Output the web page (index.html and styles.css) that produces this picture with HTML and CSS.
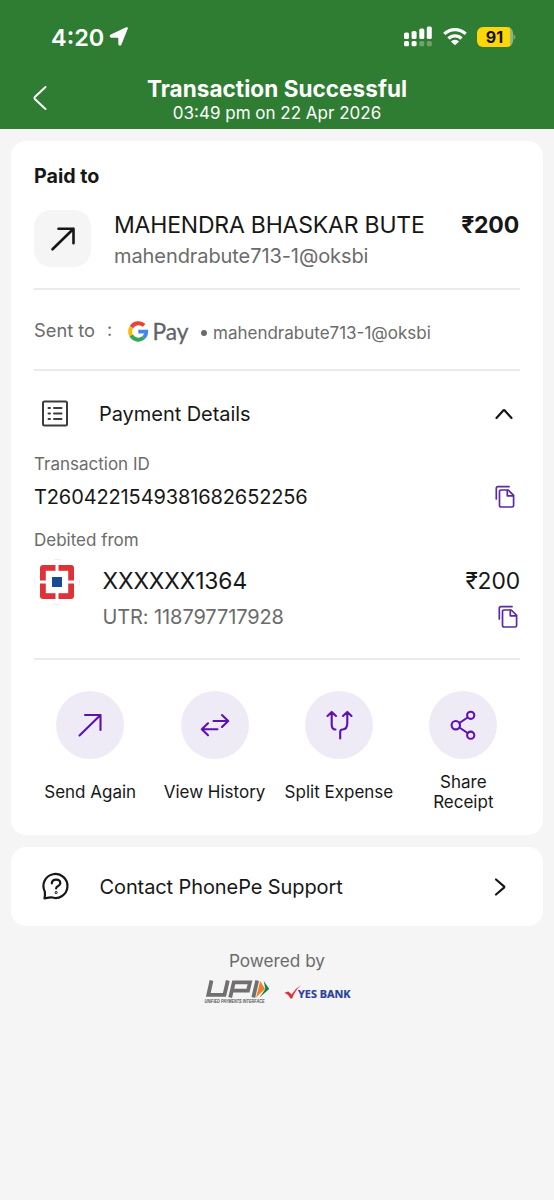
FILE: index.html
```html
<!DOCTYPE html>
<html lang="en">
<head>
<meta charset="utf-8">
<title>Transaction Successful</title>
<link rel="stylesheet" href="styles.css">
</head>
<body>
<header class="header">
  <div class="status">
    <div class="status-left">
      <span class="clock">4:20</span>
      <svg width="20" height="20" viewBox="0 0 20 20"><path d="M18 1.500 11.700 17.200Q10.800 18.600 10.100 17.200V10.800Q10.100 9.900 9.200 9.900H2.200Q.700 9.200 2.200 8.200L17 1.200Q18.400.700 18 1.500Z" fill="#fff" stroke="#fff" stroke-width="1.600" stroke-linejoin="round"/></svg>
    </div>
    <div class="status-right">
      <svg class="signal" width="30" height="22" viewBox="0 0 30 22" fill="#fff"><rect x="1" y="6.500" width="5" height="6.500" rx="1.600"/><rect x="8.600" y="5" width="5" height="8" rx="1.600"/><rect x="16.300" y="2.600" width="5" height="10.400" rx="1.600"/><rect x="23.800" y="0.500" width="5" height="12.500" rx="1.600"/><rect x="1" y="15" width="5" height="5.300" rx="1.600"/><rect x="8.600" y="15" width="5" height="5.300" rx="1.600"/><rect x="16.300" y="15" width="5" height="5.300" rx="1.600" opacity=".3"/><rect x="23.800" y="15" width="5" height="5.300" rx="1.600" opacity=".3"/></svg>
      <svg class="wifi" width="26" height="20" viewBox="0 0 26 20"><g fill="none" stroke="#fff" stroke-width="3.300"><path d="M2.300 6.900a15.500 15.500 0 0 1 21.400 0"/><path d="M6.500 11.500a9.300 9.300 0 0 1 13 0"/></g><path d="M13 18.300 8.900 14.400a6 6 0 0 1 8.200 0Z" fill="#fff"/></svg>
      <div class="battery"><span class="battery-level">91</span></div>
      <svg width="3" height="8" viewBox="0 0 3 8"><path d="M.5 1.200a3 3 0 0 1 0 5.600Z" fill="#7caf7e"/></svg>
    </div>
  </div>
  <div class="titlebar">
    <svg class="back" width="18" height="28" viewBox="0 0 18 28" fill="none" stroke="#fff" stroke-width="2" stroke-linecap="round" stroke-linejoin="round"><path d="M14.500 3 3.800 13.100Q3 14 3.800 14.900L14.500 25"/></svg>
    <div class="titles">
      <h1 class="title">Transaction Successful</h1>
      <p class="subtitle">03:49 pm on 22 Apr 2026</p>
    </div>
  </div>
</header>

<main class="content">
  <section class="card receipt">
    <h2 class="paid-to">Paid to</h2>
    <div class="payee">
      <div class="payee-icon"><svg width="28" height="28" viewBox="0 0 28 28" fill="none" stroke="#171717" stroke-width="2.600" stroke-linecap="round" stroke-linejoin="round"><path d="M3.500 24.300 24.500 3.800M9.500 3.800H24.500V18.300"/></svg></div>
      <div class="payee-text">
        <div class="payee-name">MAHENDRA BHASKAR BUTE</div>
        <div class="payee-id">mahendrabute713-1@oksbi</div>
      </div>
      <div class="amount">₹200</div>
    </div>
    <div class="sent">
      <span class="sent-label">Sent to</span>
      <span class="sent-colon">:</span>
      <svg class="gpay" width="64" height="34" viewBox="0 0 64 34">
        <g fill="none" stroke-width="4">
          <path d="M4.500 11.300A8.100 8.100 0 0 1 17.100 9.400" stroke="#ea4335"/>
          <path d="M4.200 19.600A8.100 8.100 0 0 1 4.500 11.300" stroke="#fbbc04"/>
          <path d="M16.400 21.800A8.100 8.100 0 0 1 4.200 19.600" stroke="#34a853"/>
          <path d="M11.300 15.700H19.300A8.100 8.100 0 0 1 16.400 21.800" stroke="#4285f4" stroke-width="3.700"/>
        </g>
        <text class="gpay-text" x="25.500" y="23.900" textLength="36" lengthAdjust="spacingAndGlyphs">Pay</text>
      </svg>
      <span class="sent-dot"></span>
      <span class="sent-id">mahendrabute713-1@oksbi</span>
    </div>
    <div class="details-head">
      <svg class="details-icon" width="28" height="28" viewBox="0 0 28 28" fill="none" stroke="#3c3c3c" stroke-width="2" stroke-linecap="round"><rect x="2" y="1.600" width="24" height="24" rx="1.500"/><path d="M7.500 8h1.500M7.500 13.500h1.500M7.500 19h1.500M13 8h7.500M13 13.500h7.500M13 19h7.500"/></svg>
      <span class="details-title">Payment Details</span>
      <svg class="chevron-up" width="20" height="14" viewBox="0 0 20 14" fill="none" stroke="#171717" stroke-width="2.200" stroke-linecap="round" stroke-linejoin="round"><path d="M2.500 11 9.300 3.400Q10 2.700 10.700 3.400L17.500 11"/></svg>
    </div>
    <div class="label">Transaction ID</div>
    <div class="txn">
      <span class="txn-id">T2604221549381682652256</span>
      <svg class="copy" width="20" height="24" viewBox="0 0 20 24"><use href="#copy"/></svg>
    </div>
    <div class="label label-debit">Debited from</div>
    <div class="account">
      <svg class="bank" width="46" height="46" viewBox="0 0 46 46"><circle cx="23" cy="23" r="22.500" fill="#fff" stroke="#e6e6e6" stroke-width=".7" stroke-dasharray="8 27.340" stroke-dashoffset="4"/><rect x="6" y="6" width="34" height="34" rx="3" fill="#df3238"/><rect x="11.800" y="11.800" width="22.400" height="22.400" fill="#fff"/><path d="M23 5V41M5 23H41" stroke="#fff" stroke-width="3"/><rect x="18" y="18" width="10" height="10" fill="#164b91"/></svg>
      <div class="account-text">
        <div class="account-row"><span class="account-no">XXXXXX1364</span><span class="account-amount">₹200</span></div>
        <div class="account-row utr-row"><span class="utr">UTR: 118797717928</span><svg class="copy" width="20" height="24" viewBox="0 0 20 24"><g id="copy" fill="none" stroke="#5a2aa5" stroke-width="1.700" stroke-linecap="round" stroke-linejoin="round"><path d="M1.300 14V3.300Q1.300 1.700 2.900 1.700H14"/><path d="M6.100 5H13.300L18.600 10.300V20.400Q18.600 22 17 22H6.100Q4.500 22 4.500 20.400V6.600Q4.500 5 6.100 5Z"/><path d="M12.300 5.300V10.800H18.200"/></g></svg></div>
      </div>
    </div>
    <nav class="actions">
      <div class="action"><div class="circle"><svg width="32" height="32" viewBox="0 0 32 32"><path d="M5.500 26.500 26.500 6M11 6H26.500V21"/></svg></div><span class="action-label">Send Again</span></div>
      <div class="action"><div class="circle"><svg width="32" height="32" viewBox="0 0 32 32"><path d="M14.500 12H29M23 6 29.200 12 23 18M18.500 20.200H3M9 14.300 2.800 20.200 9 26.300"/></svg></div><span class="action-label">View History</span></div>
      <div class="action"><div class="circle"><svg width="32" height="32" viewBox="0 0 32 32"><path d="M4.500 7 8.700 2.900 13 7M8.700 3.500V15.500Q8.700 20.500 12.500 20.500M20 7 24.300 2.900 28.500 7M24.300 3.500V14Q24.300 20.500 19.500 20.500Q17.200 20.500 17.200 23V29.500"/></svg></div><span class="action-label">Split Expense</span></div>
      <div class="action"><div class="circle"><svg width="32" height="32" viewBox="0 0 32 32"><circle cx="8.800" cy="16.200" r="4.200"/><circle cx="23.700" cy="6.300" r="3.600"/><circle cx="23.700" cy="26.200" r="3.600"/><path d="M12.400 14 20.600 8.500M12.400 18.500 20.600 24"/></svg></div><span class="action-label">Share<br>Receipt</span></div>
    </nav>
  </section>

  <section class="card support">
    <svg class="help" width="30" height="30" viewBox="0 0 30 30" fill="none" stroke="#171717" stroke-width="2.200" stroke-linecap="round" stroke-linejoin="round"><path d="M3.500 26.300Q4.300 23 3.800 19.500A12 12 0 1 1 10.500 25.300Q8.300 25.300 3.500 26.300Z"/><path d="M10.800 11.400Q11 7.700 15.100 7.700T19.300 11.200Q19.300 12.900 17.200 14T15.100 16.400"/><circle cx="15.100" cy="20.600" r=".4"/></svg>
    <span class="support-label">Contact PhonePe Support</span>
    <svg class="chevron-right" width="14" height="20" viewBox="0 0 14 20" fill="none" stroke="#171717" stroke-width="2.200" stroke-linecap="round" stroke-linejoin="round"><path d="M3 2.500 11 9.300Q11.700 10 11 10.700L3 17.500"/></svg>
  </section>
</main>

<footer class="footer">
  <div class="powered">Powered by</div>
  <div class="logos">
    <svg width="70" height="32" viewBox="-3 -2 70 32">
      <g fill="none" stroke="#716f70" stroke-width="3.800"><path d="M7.500 .5 4.300 14.800H20.500L23.800 .5"/><path d="M26.200 17.500 29.800 2.400H46L44 10.600H28.300"/><path d="M53.200 .5 49.300 17.500"/></g>
      <path d="M56.300 1 61 9 52 17.500Z" fill="#f07f27"/><path d="M59.800 1 65.200 9 55.500 17.500 61.300 9Z" fill="#138346"/>
      <text class="upi-text" x="0.500" y="23.400" textLength="60" lengthAdjust="spacingAndGlyphs">UNIFIED PAYMENTS INTERFACE</text>
    </svg>
    <svg width="70" height="28" viewBox="0 -4 70 28">
      <path d="M.5 8.800 4.200 7.600Q6 8.600 7.500 10.600 11 4.800 17 1.100 10.500 7.300 8.200 14.500H6.500Q4.500 10.300 .5 8.800Z" fill="#e22e3f"/>
      <text class="yes-text" x="14" y="14" textLength="52.500" lengthAdjust="spacingAndGlyphs">YES BANK</text>
    </svg>
  </div>
</footer>
</body>
</html>
```
FILE: styles.css
```css
* { box-sizing: border-box; }
body {
  margin: 0;
  min-height: 1200px;
  background: #f5f5f5;
  color: #171717;
  font-family: Inter, "Noto Sans", sans-serif;
}
h1, h2, p { margin: 0; }
svg { display: block; flex: none; overflow: visible; }
span, div { white-space: nowrap; }

.header { height: 129px; background: #2e7d32; color: #fff; }
.status {
  height: 74px;
  padding: 0 38px 0 51px;
  display: flex;
  align-items: center;
  justify-content: space-between;
}
.status-left { display: flex; align-items: center; gap: 5px; }
.clock { margin-top: 1px; font-size: 23.500px; font-weight: 600; line-height: 30px; }
.status-right { display: flex; align-items: center; }
.signal { margin-right: 9px; }
.wifi { margin-right: 9px; }
.battery {
  width: 36px;
  height: 20px;
  border-radius: 6px;
  background: linear-gradient(90deg, #ffd60a 33px, #8fb780 33px);
  color: #111;
  display: flex;
  justify-content: center;
}
.battery-level { margin-right: 1px; font-size: 16px; font-weight: 700; line-height: 20px; }
.titlebar { display: flex; align-items: center; height: 47px; padding-left: 31px; }
.titles { flex: 1; padding: 4px 49px 0 0; text-align: center; }
.title { font-size: 22.500px; font-weight: 700; line-height: 26px; letter-spacing: .06px; }
.subtitle { font-size: 17px; line-height: 22px; }

.content { padding: 12px 11px 0; display: grid; gap: 12px; }
.card { background: #fff; border-radius: 15px; }
.receipt { height: 694px; padding: 23px 23px 0; }
.paid-to { font-size: 19.700px; font-weight: 700; line-height: 24px; }
.payee {
  display: flex;
  height: 102px;
  padding-top: 22px;
  border-bottom: 2px solid #ebebeb;
}
.payee-icon {
  width: 57px;
  height: 57px;
  border-radius: 17px;
  background: #f5f5f5;
  display: grid;
  place-items: center;
}
.payee-text { flex: 1; padding-left: 23px; }
.payee-name { font-size: 23px; line-height: 30px; letter-spacing: -.2px; }
.payee-id { font-size: 20px; line-height: 32px; letter-spacing: -.08px; color: #6b6b6b; }
.amount { font-size: 23px; font-weight: 700; line-height: 30px; letter-spacing: -.2px; padding-right: 1px; }

.sent {
  display: flex;
  align-items: center;
  height: 81px;
  border-bottom: 2px solid #ebebeb;
  color: #6b6b6b;
}
.sent-label { width: 73px; font-size: 18.300px; line-height: 24px; }
.sent-colon { width: 20px; font-size: 18px; line-height: 24px; }
.gpay { margin-top: 7px; }
.gpay-text { font-family: Lato, sans-serif; font-size: 24px; fill: #5f6368; stroke: #5f6368; stroke-width: .3px; }
.sent-dot { width: 6px; height: 6px; margin: 6px 6px 0 10px; border-radius: 50%; background: #6b6b6b; }
.sent-id { margin-top: 6px; font-size: 17px; line-height: 24px; }

.details-head { display: flex; align-items: center; height: 85px; padding: 0 6px 0 7px; }
.details-title { flex: 1; padding-left: 30px; font-size: 20px; letter-spacing: -.05px; }
.label { margin-top: -3px; font-size: 17px; line-height: 22px; color: #6b6b6b; }
.txn { display: flex; align-items: center; justify-content: space-between; height: 42px; padding: 1px 5px 0 0; }
.txn-id { font-size: 20px; letter-spacing: -.12px; }
.label-debit { margin-top: 12px; }
.account { display: flex; height: 109px; padding-top: 8px; border-bottom: 2px solid #ebebeb; }
.account-text { flex: 1; padding: 4px 0 0 22.500px; }
.account-row { display: flex; align-items: center; justify-content: space-between; height: 36px; }
.utr-row { padding-right: 2px; }
.account-no, .account-amount { font-size: 22.800px; line-height: 30px; letter-spacing: -.1px; }
.utr { font-size: 20px; line-height: 30px; letter-spacing: -.1px; color: #6b6b6b; }

.actions { display: grid; grid-template-columns: repeat(4, 1fr); margin: 31px -5.500px 0 -6px; }
.action { display: flex; flex-direction: column; align-items: center; }
.circle {
  width: 68px;
  height: 68px;
  border-radius: 50%;
  background: #eeeaf6;
  display: grid;
  place-items: center;
  fill: none;
  stroke: #5f10b4;
  stroke-width: 2.100;
  stroke-linecap: round;
  stroke-linejoin: round;
}
.action-label {
  height: 66px;
  display: grid;
  place-items: center;
  text-align: center;
  font-size: 17px;
  line-height: 20.500px;
}
.support { display: flex; align-items: center; height: 79px; padding: 0 36px 0 30px; }
.support-label { flex: 1; padding-left: 28.500px; font-size: 20px; letter-spacing: -.1px; }
.footer { padding-top: 23px; }
.powered { text-align: center; font-size: 17.200px; line-height: 24px; color: #6b6b6b; }
.logos { display: flex; align-items: center; justify-content: center; gap: 13px; margin-top: 5px; }
.upi-text { font: italic 700 4.500px "Liberation Sans", sans-serif; fill: #555; }
.yes-text { font: 700 11px "Noto Sans", sans-serif; fill: #2b429b; stroke: #2b429b; stroke-width: .2px; }
```
